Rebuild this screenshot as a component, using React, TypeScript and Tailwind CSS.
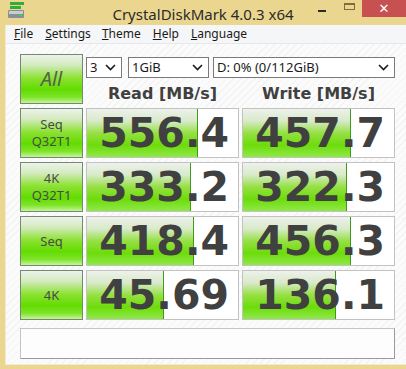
import React from "react";

const rows = [
  { label: ["Seq", "Q32T1"], read: "556.4", write: "457.7", rw: 111, ww: 108 },
  { label: ["4K", "Q32T1"], read: "333.2", write: "322.3", rw: 104, ww: 104 },
  { label: ["Seq"], read: "418.4", write: "456.3", rw: 107, ww: 108 },
  { label: ["4K"], read: "45.69", write: "136.1", rw: 77, ww: 93 },
];

const greenBtn =
  "border border-[#728a70] bg-[linear-gradient(to_bottom,#eef2ec_0%,#d2eabb_22%,#8ce232_48%,#62dc00_72%,#7ee42a_88%,#c8f49a_100%)]";

const barFill =
  "bg-[linear-gradient(to_bottom,#eef1ec_0%,#d8eac9_25%,#96e044_50%,#6ddc0a_75%,#8fe848_100%)]";

const Chevron = () => (
  <svg width="11" height="7" viewBox="0 0 11 7" className="shrink-0">
    <path d="M1 1 L5.5 5.5 L10 1" stroke="#1a1a1a" strokeWidth="1.6" fill="none" />
  </svg>
);

const Select = ({ text, width }: { text: string; width: string }) => (
  <div className={`${width} h-[21px] border border-[#7a7a7a] bg-white flex items-center justify-between pl-[3px] pr-[5px] text-[13px] text-[#1a1a1a]`}>
    <span>{text}</span>
    <Chevron />
  </div>
);

const ValueBox = ({ value, bar }: { value: string; bar: number }) => (
  <div className="relative w-[153px] h-[50px] border border-[#c2c2c2] bg-white overflow-hidden">
    <div
      className={`absolute left-0 top-0 bottom-0 border-r border-[#3f9a1a] ${barFill}`}
      style={{ width: bar }}
    />
    <div className="relative h-full flex items-center justify-end pr-[9px] text-[41px] font-bold text-[#404040] leading-none font-['DejaVu_Sans',sans-serif]">
      {value}
    </div>
  </div>
);

export default function App() {
  return (
    <div className="w-[406px] h-[369px] flex flex-col bg-[#ead68f] overflow-hidden font-['Noto_Sans','DejaVu_Sans',sans-serif]">
      {/* title bar */}
      <div className="relative h-[25px] shrink-0 flex items-center justify-center">
        <svg width="17" height="16" viewBox="0 0 17 16" className="absolute left-[8px] top-[2px]">
          <rect x="2" y="0" width="14" height="3" fill="#2fae3c" />
          <rect x="2" y="4" width="11" height="3" fill="#2fae3c" />
          <rect x="0" y="8" width="16" height="8" rx="1" fill="#8a8f93" />
          <rect x="1" y="9" width="14" height="3" fill="#c9cdd0" />
          <rect x="11" y="12" width="3" height="2" fill="#3fd04a" />
        </svg>
        <span className="text-[15px] text-[#2b2b2b] pt-[3px]">CrystalDiskMark 4.0.3 x64</span>
        <div className="absolute left-[318px] top-[10px] w-[8px] h-[2px] bg-[#2b2b2b]" />
        <div className="absolute left-[344px] top-[3px] w-[11px] h-[7px] border border-[#7e6c3a] border-t-2" />
        <div className="absolute right-0 top-0 w-[44px] h-[17px] bg-[#c75050] flex items-center justify-center text-white text-[13px] font-bold leading-none">
          ✕
        </div>
      </div>

      <div className="flex flex-1 min-h-0">
        <div className="w-[5px] shrink-0" />
        <div className="flex-1 flex flex-col border-l border-b border-[#f3ebcf] min-w-0">
          {/* menu */}
          <div className="h-[19px] shrink-0 bg-[#f5f6f7] border-b border-[#e6e8ea] flex items-center gap-[12px] pl-[8px] text-[12px] text-[#1a1a1a]">
            <span><u>F</u>ile</span>
            <span><u>S</u>ettings</span>
            <span className="-ml-[1px]"><u>T</u>heme</span>
            <span><u>H</u>elp</span>
            <span><u>L</u>anguage</span>
          </div>

          {/* content */}
          <div className="flex-1 pl-[14px] pt-[10px] bg-[repeating-linear-gradient(135deg,#f3f3f3_0px,#f3f3f3_1px,#fbfbfb_1px,#fbfbfb_5px)]">
            <div className="flex gap-[3px]">
              <div className={`w-[63px] h-[50px] ${greenBtn} flex items-center justify-center text-[20px] italic text-[#55624f]`}>
                All
              </div>
              <div className="flex flex-col">
                <div className="flex mt-[3px]">
                  <Select text="3" width="w-[36px]" />
                  <div className="ml-[6px]"><Select text="1GiB" width="w-[81px]" /></div>
                  <div className="ml-[4px]"><Select text="D: 0% (0/112GiB)" width="w-[182px]" /></div>
                </div>
                <div className="flex gap-[3px] h-[26px] pt-[5px] items-center font-['DejaVu_Sans',sans-serif] text-[16px] font-bold text-[#404040]">
                  <div className="w-[153px] text-center">Read [MB/s]</div>
                  <div className="w-[153px] text-center">Write [MB/s]</div>
                </div>
              </div>
            </div>

            {rows.map((r, i) => (
              <div key={i} className="flex gap-[3px] mt-[4px]">
                <div className={`w-[63px] h-[50px] ${greenBtn} flex flex-col items-center justify-center text-[13px] leading-[17px] text-[#4a4a4a]`}>
                  {r.label.map((l) => (
                    <span key={l}>{l}</span>
                  ))}
                </div>
                <ValueBox value={r.read} bar={r.rw} />
                <ValueBox value={r.write} bar={r.ww} />
              </div>
            ))}

            <div className="mt-[8px] w-[375px] h-[31px] border border-[#c4c4c4] border-r-[#9a9a9a] border-b-[#9a9a9a] bg-[#fdfdfd]" />
          </div>
        </div>
      </div>
      <div className="h-[4px] shrink-0" />
    </div>
  );
}
